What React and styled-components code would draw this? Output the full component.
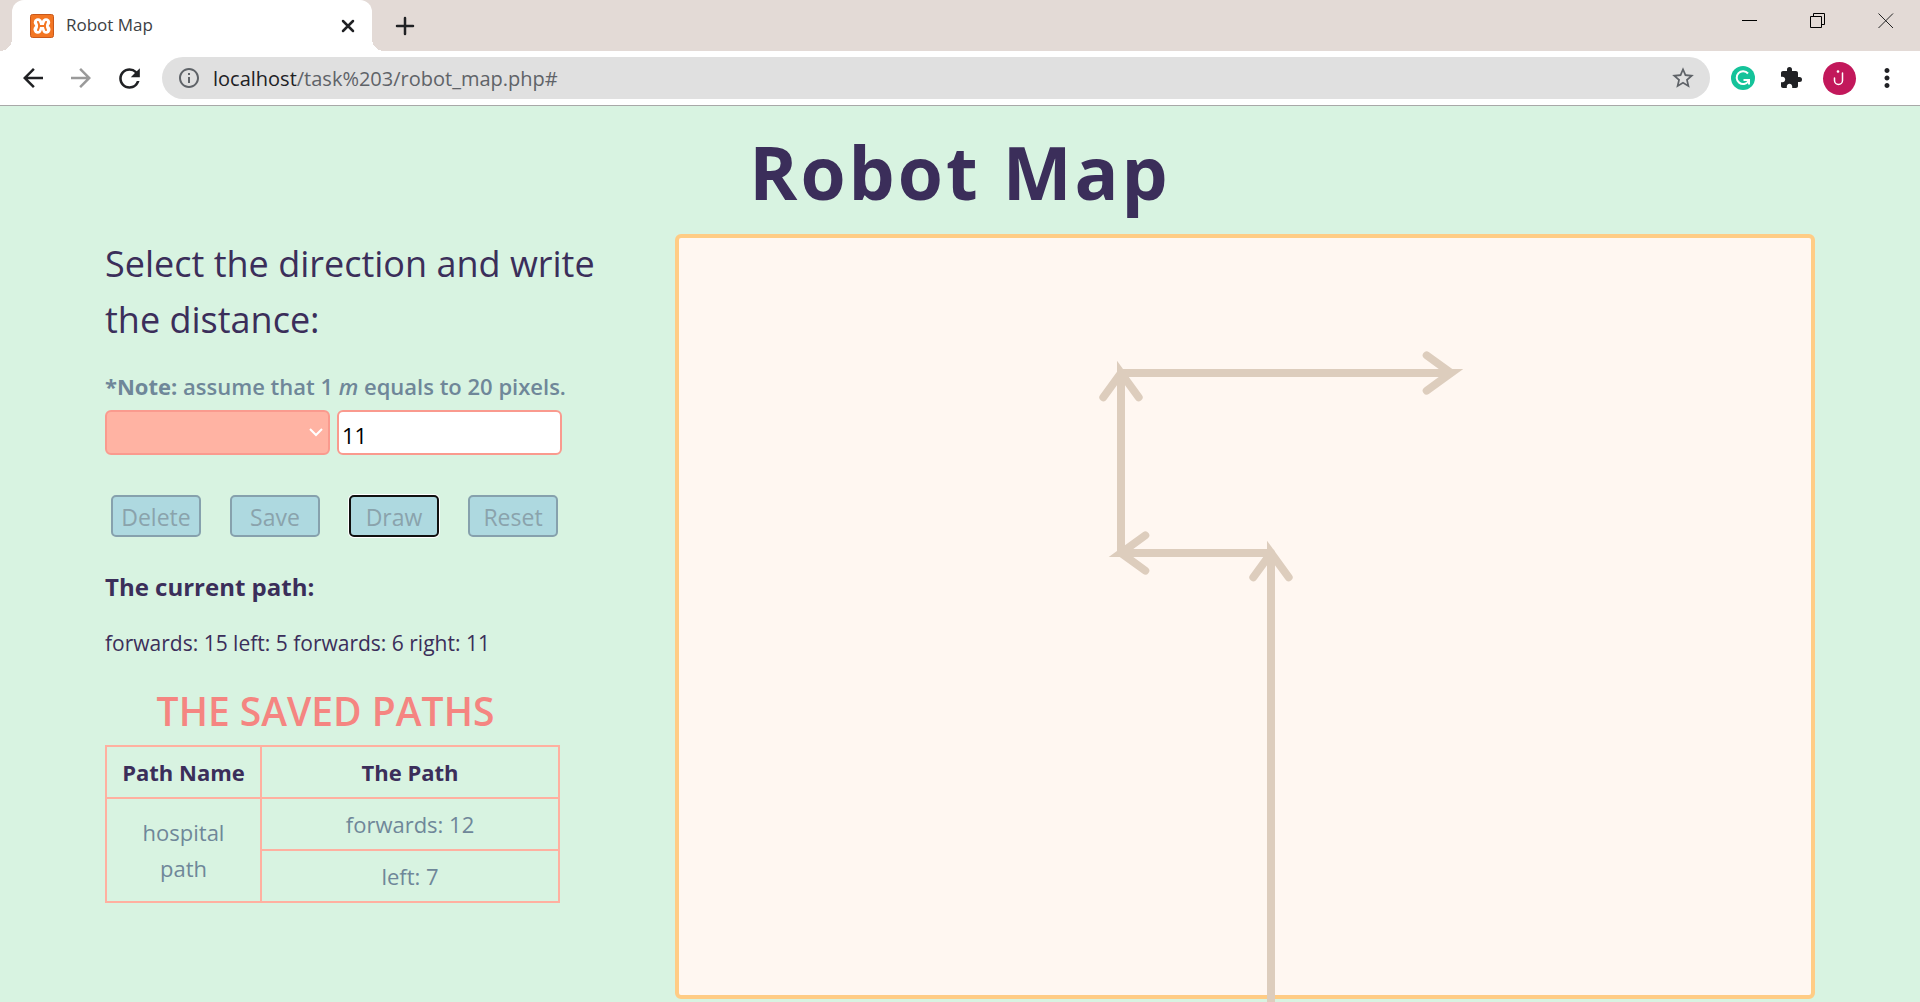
import React from "react";
import styled, { createGlobalStyle } from "styled-components";
import {
  MdArrowBack, MdArrowForward, MdRefresh, MdInfoOutline, MdStarBorder,
  MdExtension, MdMoreVert,
} from "react-icons/md";

const GlobalStyle = createGlobalStyle`
  * { box-sizing: border-box; }
  body {
    margin: 0;
    font-family: "Segoe UI", "Open Sans", "Noto Sans", sans-serif;
    background: #d8f3e1;
  }
  button, input, select { font-family: inherit; }
`;

const Window = styled.div`
  display: flex;
  flex-direction: column;
  height: 100vh;
  overflow: hidden;
`;

const TabStrip = styled.div`
  display: flex;
  flex: none;
  height: 51px;
  padding-left: 12px;
  background: #e3dad6;
`;

const Tab = styled.div`
  position: relative;
  display: flex;
  align-items: center;
  width: 360px;
  padding: 0 12px 0 18px;
  border-radius: 12px 12px 0 0;
  background: #fff;
  font-size: 17px;
  line-height: 24px;
  color: #3c4043;

  &::before, &::after {
    content: "";
    position: absolute;
    bottom: 0;
    width: 12px;
    height: 12px;
  }
  &::before { right: 100%; background: radial-gradient(circle at 0 0, #e3dad6 12px, #fff 12px); }
  &::after { left: 100%; background: radial-gradient(circle at 100% 0, #e3dad6 12px, #fff 12px); }
`;

const TabTitle = styled.span`
  flex: 1;
  padding: 0 0 2px 12px;
`;

const IconButton = styled.button`
  display: flex;
  align-items: center;
  justify-content: center;
  width: ${(p) => p.$width || 48}px;
  height: 100%;
  padding: 0;
  border: 0;
  background: none;
  color: ${(p) => p.$color || "#202124"};
`;

const WindowControls = styled.div`
  display: flex;
  height: 42px;
  margin-left: auto;
`;

const Toolbar = styled.div`
  display: flex;
  flex: none;
  align-items: center;
  height: 55px;
  padding: 0 9px;
  background: #fff;
  border-bottom: 1px solid #a8a8a8;
`;

const AddressBar = styled.div`
  display: flex;
  flex: 1;
  align-items: center;
  height: 42px;
  margin: 0 9px;
  padding: 0 3px 0 15px;
  border-radius: 21px;
  background: #e0e0e0;
  color: #5f6368;
`;

const Url = styled.span`
  flex: 1;
  padding-left: 12px;
  font-size: 20px;
  b { font-weight: 400; color: #202124; }
`;

const Avatar = styled.span`
  display: flex;
  align-items: center;
  justify-content: center;
  width: 33px;
  height: 33px;
  border-radius: 50%;
  background: #c2185b;
`;

const Page = styled.main`
  flex: 1;
  padding: 14px 105px 0;
  color: #3b2e5a;
`;

const Title = styled.h1`
  margin: 0 0 10px;
  font-size: 73px;
  font-weight: 700;
  line-height: 104px;
  letter-spacing: 3px;
  text-align: center;
`;

const Columns = styled.div`
  display: grid;
  grid-template-columns: 1fr 2fr;
  align-items: start;
`;

const Controls = styled.section`
  padding: 2px 60px 0 0;
`;

const Heading = styled.h2`
  margin: 0;
  font-size: 36px;
  font-weight: 400;
  line-height: 56px;
`;

const Note = styled.p`
  margin: 20px 0 6px;
  font-size: 22px;
  font-weight: 600;
  line-height: 36px;
  color: #6f8799;
  b { font-weight: 700; }
`;

const FieldRow = styled.form`
  display: flex;
  gap: 7px;
`;

const SelectWrap = styled.div`
  position: relative;
  display: flex;
  svg { position: absolute; right: 7px; top: 18px; pointer-events: none; }
`;

const DirectionSelect = styled.select`
  appearance: none;
  width: 225px;
  height: 45px;
  border: 2px solid #fa9a8e;
  border-radius: 6px;
  background: #ffb3a3;
  font-size: 22px;
`;

const DistanceInput = styled.input`
  width: 225px;
  height: 45px;
  padding: 4px 3px 0;
  border: 2px solid #fa9a8e;
  border-radius: 6px;
  background: #fff;
  font-size: 22px;
  color: #000;
`;

const ButtonRow = styled.div`
  display: flex;
  gap: 29px;
  padding: 40px 0 0 6px;
`;

const ActionButton = styled.button`
  width: 90px;
  height: 42px;
  padding: 2px 0 0;
  border: 2px solid ${(p) => (p.$focused ? "#101010" : "#86a1ad")};
  border-radius: 5px;
  box-shadow: ${(p) => (p.$focused ? "0 0 0 1px #fff" : "none")};
  background: #aed9e0;
  font-size: 23px;
  line-height: 32px;
  color: #8aa3ac;
`;

const PathLabel = styled.h3`
  margin: 32px 0 0;
  font-size: 24px;
  font-weight: 700;
  line-height: 36px;
`;

const PathText = styled.p`
  margin: 20px 0 0;
  font-size: 21px;
  line-height: 36px;
`;

const SavedTable = styled.table`
  width: 455px;
  margin-top: 20px;
  border-collapse: collapse;
  font-size: 22px;
  line-height: 36px;
  text-align: center;
  color: #6f8799;

  caption {
    padding: 0 14px 4px 0;
    font-size: 39px;
    font-weight: 600;
    line-height: 60px;
    color: #f58581;
  }
  th, td {
    height: 52px;
    padding: 7px 14px;
    border: 2px solid #ffb0a0;
  }
  th { color: #3b2e5a; white-space: nowrap; }
  th:first-child { width: 155px; }
`;

const Board = styled.section`
  display: flex;
  border: 4px solid #ffcc85;
  border-radius: 6px;
  background: #fff7f1;
  svg { width: 100%; height: auto; overflow: visible; }
`;

// Each metre is drawn as 30 units on the board.
const METRE = 30;
const HEAD = 30;
const START = { x: 592, y: 765 };
const STEPS = [["forwards", 15], ["left", 5], ["forwards", 6], ["right", 11]];
const ANGLES = { forwards: -Math.PI / 2, left: Math.PI, right: 0, backwards: Math.PI / 2 };

function arrowPaths(steps) {
  let { x, y } = START;
  return steps.map(([direction, distance]) => {
    const a = ANGLES[direction];
    const tx = x + Math.cos(a) * distance * METRE;
    const ty = y + Math.sin(a) * distance * METRE;
    const wing = (turn) =>
      `L${tx - HEAD * Math.cos(a + turn)} ${ty - HEAD * Math.sin(a + turn)}`;
    const d = `M${x} ${y}L${tx} ${ty}${wing(-Math.PI / 5)}M${tx} ${ty}${wing(Math.PI / 5)}`;
    x = tx;
    y = ty;
    return d;
  });
}

const Xampp = () => (
  <svg width="24" height="24" viewBox="0 0 24 24" aria-hidden="true">
    <rect x="0.5" y="0.5" width="23" height="23" rx="2" fill="#f37623" stroke="#c9581a" />
    <g fill="#fff">
      <circle cx="8" cy="8.5" r="4.200" />
      <circle cx="16" cy="8.500" r="4.200" />
      <circle cx="7.700" cy="15.500" r="4.200" />
      <circle cx="16.300" cy="15.500" r="4.200" />
      <rect x="6" y="8.500" width="12" height="7" />
    </g>
    <path d="M8 8q2.200 4 0 8M16 8q-2.200 4 0 8M9 12h6" fill="none" stroke="#f37623" strokeWidth="2" strokeLinecap="round" />
  </svg>
);

const Grammarly = () => (
  <svg width="24" height="24" viewBox="0 0 24 24" aria-hidden="true">
    <circle cx="12" cy="12" r="12" fill="#15c39a" />
    <path d="M17 7.500A6.400 6.400 0 1 0 17.500 15M12.500 14h5.500v4.500" fill="none" stroke="#fff" strokeWidth="2" />
  </svg>
);

export default function App() {
  return (
    <>
      <GlobalStyle />
      <Window>
        <TabStrip>
          <Tab>
            <Xampp />
            <TabTitle>Robot Map</TabTitle>
            <IconButton $width={24} aria-label="Close tab">
              <svg width="14" height="14" stroke="currentColor" strokeWidth="2.500" strokeLinecap="round"><path d="M2 2L12 12M12 2L2 12" /></svg>
            </IconButton>
          </Tab>
          <IconButton $width={66} aria-label="New tab">
            <svg width="20" height="20" stroke="currentColor" strokeWidth="2.500" strokeLinecap="round"><path d="M10 2V18M2 10H18" /></svg>
          </IconButton>
          <WindowControls>
            <IconButton $width={68} aria-label="Minimize">
              <svg width="16" height="16"><path d="M0 7.500H15" stroke="#000" /></svg>
            </IconButton>
            <IconButton $width={68} aria-label="Restore">
              <svg width="16" height="16" fill="none" stroke="#000"><path d="M.5 3.500H11.500V14.500H.5zM3.500 3.500V.5H14.500V11.500H11.500" /></svg>
            </IconButton>
            <IconButton $width={68} aria-label="Close window">
              <svg width="16" height="16"><path d="M.5 .5L15 15M15 .5L.5 15" stroke="#222" /></svg>
            </IconButton>
          </WindowControls>
        </TabStrip>

        <Toolbar>
          <IconButton aria-label="Back"><MdArrowBack size={30} /></IconButton>
          <IconButton $color="#9a9a9a" aria-label="Forward"><MdArrowForward size={30} /></IconButton>
          <IconButton aria-label="Reload"><MdRefresh size={31} /></IconButton>
          <AddressBar>
            <MdInfoOutline size={24} />
            <Url><b>localhost</b>/task%203/robot_map.php#</Url>
            <IconButton $color="#5f6368" aria-label="Bookmark"><MdStarBorder size={26} /></IconButton>
          </AddressBar>
          <IconButton aria-label="Grammarly"><Grammarly /></IconButton>
          <IconButton aria-label="Extensions"><MdExtension size={24} /></IconButton>
          <IconButton aria-label="Profile">
            <Avatar>
              <svg width="14" height="18" viewBox="0 0 14 18" fill="none" stroke="#fff" strokeWidth="1.500" strokeLinecap="round">
                <path d="M2.500 9v2.500a4 4 0 0 0 8 0V4" />
                <circle cx="6" cy="2.500" r=".6" fill="#fff" />
              </svg>
            </Avatar>
          </IconButton>
          <IconButton aria-label="Menu"><MdMoreVert size={30} /></IconButton>
        </Toolbar>

        <Page>
          <Title>Robot Map</Title>
          <Columns>
            <Controls>
              <Heading>Select the direction and write the distance:</Heading>
              <Note><b>*Note:</b> assume that 1 <em>m</em> equals to 20 pixels.</Note>
              <FieldRow>
                <SelectWrap>
                  <DirectionSelect aria-label="Direction" defaultValue="">
                    <option value="" />
                    <option value="forwards">forwards</option>
                    <option value="left">left</option>
                    <option value="right">right</option>
                  </DirectionSelect>
                  <svg width="14" height="9" fill="none" stroke="#fff" strokeWidth="2"><path d="M1 1L7 7L13 1" /></svg>
                </SelectWrap>
                <DistanceInput aria-label="Distance" defaultValue="11" />
              </FieldRow>
              <ButtonRow>
                <ActionButton>Delete</ActionButton>
                <ActionButton>Save</ActionButton>
                <ActionButton $focused>Draw</ActionButton>
                <ActionButton>Reset</ActionButton>
              </ButtonRow>
              <PathLabel>The current path:</PathLabel>
              <PathText>{STEPS.map(([direction, distance]) => `${direction}: ${distance}`).join(" ")}</PathText>
              <SavedTable>
                <caption>THE SAVED PATHS</caption>
                <thead>
                  <tr><th>Path Name</th><th>The Path</th></tr>
                </thead>
                <tbody>
                  <tr><td rowSpan={2}>hospital path</td><td>forwards: 12</td></tr>
                  <tr><td>left: 7</td></tr>
                </tbody>
              </SavedTable>
            </Controls>
            <Board aria-label="Map">
              <svg viewBox="0 0 1132 757" fill="none" stroke="#ddcdbd" strokeWidth="8" strokeLinecap="round" strokeMiterlimit="10">
                {arrowPaths(STEPS).map((d) => <path key={d} d={d} />)}
              </svg>
            </Board>
          </Columns>
        </Page>
      </Window>
    </>
  );
}
